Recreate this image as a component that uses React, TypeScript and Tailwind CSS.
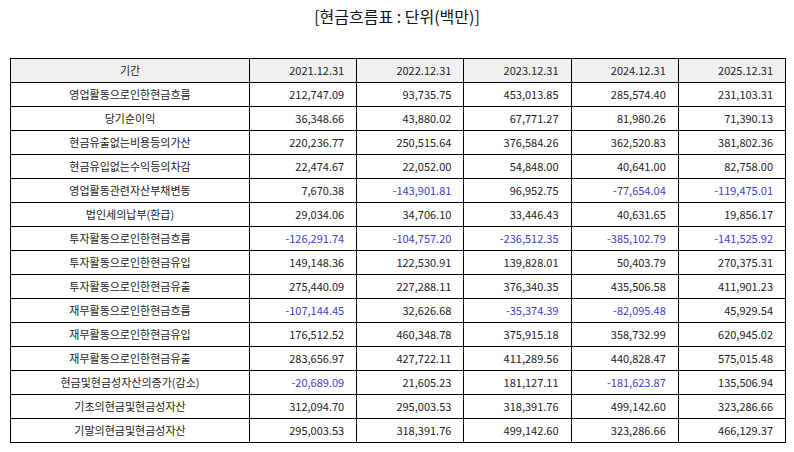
const years = ["2021.12.31", "2022.12.31", "2023.12.31", "2024.12.31", "2025.12.31"];

const rows: [string, string[]][] = [
  ["영업활동으로인한현금흐름", ["212,747.09", "93,735.75", "453,013.85", "285,574.40", "231,103.31"]],
  ["당기순이익", ["36,348.66", "43,880.02", "67,771.27", "81,980.26", "71,390.13"]],
  ["현금유출없는비용등의가산", ["220,236.77", "250,515.64", "376,584.26", "362,520.83", "381,802.36"]],
  ["현금유입없는수익등의차감", ["22,474.67", "22,052.00", "54,848.00", "40,641.00", "82,758.00"]],
  ["영업활동관련자산부채변동", ["7,670.38", "-143,901.81", "96,952.75", "-77,654.04", "-119,475.01"]],
  ["법인세의납부(환급)", ["29,034.06", "34,706.10", "33,446.43", "40,631.65", "19,856.17"]],
  ["투자활동으로인한현금흐름", ["-126,291.74", "-104,757.20", "-236,512.35", "-385,102.79", "-141,525.92"]],
  ["투자활동으로인한현금유입", ["149,148.36", "122,530.91", "139,828.01", "50,403.79", "270,375.31"]],
  ["투자활동으로인한현금유출", ["275,440.09", "227,288.11", "376,340.35", "435,506.58", "411,901.23"]],
  ["재무활동으로인한현금흐름", ["-107,144.45", "32,626.68", "-35,374.39", "-82,095.48", "45,929.54"]],
  ["재무활동으로인한현금유입", ["176,512.52", "460,348.78", "375,915.18", "358,732.99", "620,945.02"]],
  ["재무활동으로인한현금유출", ["283,656.97", "427,722.11", "411,289.56", "440,828.47", "575,015.48"]],
  ["현금및현금성자산의증가(감소)", ["-20,689.09", "21,605.23", "181,127.11", "-181,623.87", "135,506.94"]],
  ["기초의현금및현금성자산", ["312,094.70", "295,003.53", "318,391.76", "499,142.60", "323,286.66"]],
  ["기말의현금및현금성자산", ["295,003.53", "318,391.76", "499,142.60", "323,286.66", "466,129.37"]],
];

export default function App() {
  return (
    <div
      className="w-[794px] h-[452px] bg-white text-[#222]"
      style={{ fontFamily: '"Noto Sans CJK KR", "Noto Sans", sans-serif' }}
    >
      <h1 className="h-[36px] pt-[4px] text-center text-[16px] leading-[24px] text-[#111]">
        [현금흐름표 : 단위(백만)]
      </h1>
      <div className="pt-[22px] pl-[10px]">
        <table className="w-[776px] table-fixed border-collapse text-[11px]">
          <colgroup>
            <col className="w-[239px]" />
            <col />
            <col />
            <col />
            <col />
            <col />
          </colgroup>
          <thead>
            <tr className="bg-[#f0f0f0]">
              <th className="h-[24px] border border-black p-0 text-center font-normal">기간</th>
              {years.map((y) => (
                <th key={y} className="h-[24px] border border-black p-0 pr-[12px] text-right font-normal">
                  {y}
                </th>
              ))}
            </tr>
          </thead>
          <tbody>
            {rows.map(([label, vals]) => (
              <tr key={label}>
                <td className="h-[24px] border border-black p-0 text-center">{label}</td>
                {vals.map((v, i) => (
                  <td
                    key={i}
                    className={
                      v.startsWith("-")
                        ? "h-[24px] border border-black p-0 pr-[12px] text-right text-[#3c3cd2]"
                        : "h-[24px] border border-black p-0 pr-[12px] text-right"
                    }
                  >
                    {v}
                  </td>
                ))}
              </tr>
            ))}
          </tbody>
        </table>
      </div>
    </div>
  );
}
